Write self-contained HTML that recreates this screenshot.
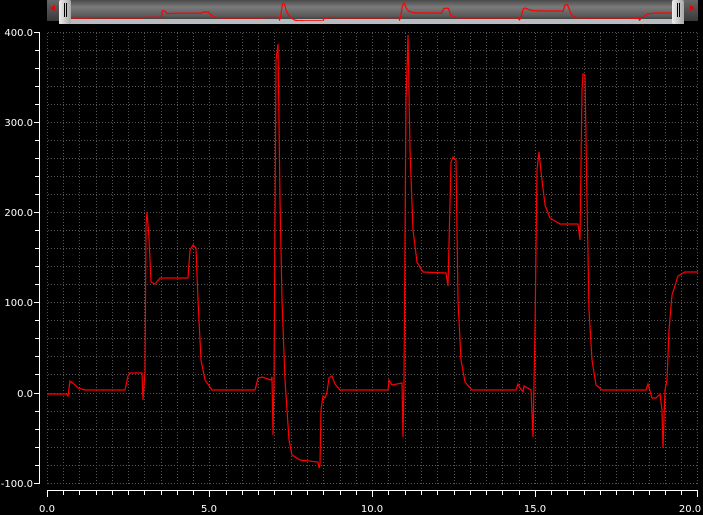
<!DOCTYPE html>
<html><head><style>
html,body{margin:0;padding:0;background:#000;width:703px;height:515px;overflow:hidden;font-family:"DejaVu Sans","Liberation Sans",sans-serif;}
svg{position:absolute;left:0;top:0}
</style></head><body>
<svg width="703" height="515" viewBox="0 0 703 515">
<defs>
<linearGradient id="bar" x1="0" y1="0" x2="0" y2="1">
<stop offset="0" stop-color="#4a4a4a"/><stop offset="0.35" stop-color="#7a7a7a"/><stop offset="0.8" stop-color="#5a5a5a"/><stop offset="1" stop-color="#3a3a3a"/></linearGradient>
<linearGradient id="hdl" x1="0" y1="0" x2="1" y2="0">
<stop offset="0" stop-color="#eeeeee"/><stop offset="1" stop-color="#a8a8a8"/></linearGradient>
<linearGradient id="end" x1="0" y1="0" x2="0" y2="1">
<stop offset="0" stop-color="#666"/><stop offset="1" stop-color="#3a3a3a"/></linearGradient>
<clipPath id="cp"><rect x="71" y="0" width="601" height="21"/></clipPath>
<pattern id="hg" width="3" height="1" patternUnits="userSpaceOnUse"><rect width="1" height="1" fill="#555"/></pattern>
<pattern id="vg" width="1" height="3" patternUnits="userSpaceOnUse"><rect width="1" height="1" fill="#555"/></pattern>
</defs>
<rect x="47" y="0" width="651" height="21" fill="url(#end)"/>
<rect x="71" y="0" width="601" height="20" fill="url(#bar)"/>
<rect x="59" y="19" width="625" height="5" fill="#b8bcc0"/>
<polygon points="50,8 55,5 55,11" fill="#e00"/>
<polygon points="695,8 690,5 690,11" fill="#e00"/>
<g clip-path="url(#cp)"><g transform="translate(71,18) scale(0.923,0.0416) translate(-47,-393)">
<polyline fill="none" stroke="#f00" stroke-width="1.2" vector-effect="non-scaling-stroke" points="47,394 67,394 68,396 70,381 74,384 78,388 85,390 125,390 128,376 130,373 142,373 143,400 145,372 146,225 147,212 149,238 151,282 155,284 160,278 188,278 190,250 193,245 196,248 198,300 201,360 205,380 212,390 255,390 258,378 262,377 271,380 272,377 273,435 274,380 276,60 278,44 280,200 282,300 285,380 289,440 292,455 300,460 318,462 319,468 320,465 321,410 323,396 325,398 327,392 329,378 332,376 335,384 340,390 388,390 389,380 392,385 402,383 403,437 404,380 406,100 408,35 410,150 413,230 417,262 423,272 446,273 448,286 451,162 453,157 456,160 458,300 461,360 465,382 472,390 516,390 518,384 520,388 523,392 524,386 531,390 533,437 535,330 537,170 539,152 541,172 545,205 550,218 560,224 578,224 580,240 582,90 583,74 585,75 587,200 589,310 592,360 596,385 602,390 646,390 648,384 652,398 656,398 660,394 662,410 663,448 665,390 667,380 669,330 672,295 678,276 685,272 698,272"/>
</g></g>
<rect x="59" y="0" width="12" height="24" rx="2" fill="url(#hdl)"/>
<rect x="64" y="3" width="1" height="14" fill="#000"/><rect x="66" y="3" width="1" height="14" fill="#000"/>
<rect x="672" y="0" width="12" height="24" rx="2" fill="url(#hdl)"/>
<rect x="677" y="3" width="1" height="14" fill="#000"/><rect x="679" y="3" width="1" height="14" fill="#000"/>
<g fill="url(#hg)">
<rect x="47" y="32" width="651" height="1"/><rect x="47" y="50" width="651" height="1"/><rect x="47" y="68" width="651" height="1"/><rect x="47" y="86" width="651" height="1"/><rect x="47" y="104" width="651" height="1"/><rect x="47" y="122" width="651" height="1"/><rect x="47" y="140" width="651" height="1"/><rect x="47" y="158" width="651" height="1"/><rect x="47" y="176" width="651" height="1"/><rect x="47" y="194" width="651" height="1"/><rect x="47" y="212" width="651" height="1"/><rect x="47" y="230" width="651" height="1"/><rect x="47" y="248" width="651" height="1"/><rect x="47" y="266" width="651" height="1"/><rect x="47" y="284" width="651" height="1"/><rect x="47" y="302" width="651" height="1"/><rect x="47" y="320" width="651" height="1"/><rect x="47" y="338" width="651" height="1"/><rect x="47" y="356" width="651" height="1"/><rect x="47" y="374" width="651" height="1"/><rect x="47" y="393" width="651" height="1"/><rect x="47" y="411" width="651" height="1"/><rect x="47" y="429" width="651" height="1"/><rect x="47" y="447" width="651" height="1"/><rect x="47" y="465" width="651" height="1"/><rect x="47" y="483" width="651" height="1"/>
</g>
<g fill="url(#vg)">
<rect x="47" y="32" width="1" height="452"/><rect x="63" y="32" width="1" height="452"/><rect x="79" y="32" width="1" height="452"/><rect x="96" y="32" width="1" height="452"/><rect x="112" y="32" width="1" height="452"/><rect x="128" y="32" width="1" height="452"/><rect x="144" y="32" width="1" height="452"/><rect x="161" y="32" width="1" height="452"/><rect x="177" y="32" width="1" height="452"/><rect x="193" y="32" width="1" height="452"/><rect x="209" y="32" width="1" height="452"/><rect x="226" y="32" width="1" height="452"/><rect x="242" y="32" width="1" height="452"/><rect x="258" y="32" width="1" height="452"/><rect x="274" y="32" width="1" height="452"/><rect x="291" y="32" width="1" height="452"/><rect x="307" y="32" width="1" height="452"/><rect x="323" y="32" width="1" height="452"/><rect x="340" y="32" width="1" height="452"/><rect x="356" y="32" width="1" height="452"/><rect x="372" y="32" width="1" height="452"/><rect x="388" y="32" width="1" height="452"/><rect x="405" y="32" width="1" height="452"/><rect x="421" y="32" width="1" height="452"/><rect x="437" y="32" width="1" height="452"/><rect x="454" y="32" width="1" height="452"/><rect x="470" y="32" width="1" height="452"/><rect x="486" y="32" width="1" height="452"/><rect x="502" y="32" width="1" height="452"/><rect x="519" y="32" width="1" height="452"/><rect x="535" y="32" width="1" height="452"/><rect x="551" y="32" width="1" height="452"/><rect x="567" y="32" width="1" height="452"/><rect x="584" y="32" width="1" height="452"/><rect x="600" y="32" width="1" height="452"/><rect x="616" y="32" width="1" height="452"/><rect x="633" y="32" width="1" height="452"/><rect x="649" y="32" width="1" height="452"/><rect x="665" y="32" width="1" height="452"/><rect x="681" y="32" width="1" height="452"/><rect x="697" y="32" width="1" height="452"/>
</g>
<g stroke="#fff" stroke-width="1" shape-rendering="crispEdges">
<line x1="39.5" y1="32" x2="39.5" y2="484"/>
<line x1="34" y1="32.5" x2="40" y2="32.5"/><line x1="34" y1="122.5" x2="40" y2="122.5"/><line x1="34" y1="212.5" x2="40" y2="212.5"/><line x1="34" y1="302.5" x2="40" y2="302.5"/><line x1="34" y1="393.5" x2="40" y2="393.5"/><line x1="34" y1="483.5" x2="40" y2="483.5"/>
<line x1="35" y1="50.5" x2="40" y2="50.5"/><line x1="35" y1="68.5" x2="40" y2="68.5"/><line x1="35" y1="86.5" x2="40" y2="86.5"/><line x1="35" y1="104.5" x2="40" y2="104.5"/><line x1="35" y1="140.5" x2="40" y2="140.5"/><line x1="35" y1="158.5" x2="40" y2="158.5"/><line x1="35" y1="176.5" x2="40" y2="176.5"/><line x1="35" y1="194.5" x2="40" y2="194.5"/><line x1="35" y1="230.5" x2="40" y2="230.5"/><line x1="35" y1="248.5" x2="40" y2="248.5"/><line x1="35" y1="266.5" x2="40" y2="266.5"/><line x1="35" y1="284.5" x2="40" y2="284.5"/><line x1="35" y1="320.5" x2="40" y2="320.5"/><line x1="35" y1="338.5" x2="40" y2="338.5"/><line x1="35" y1="356.5" x2="40" y2="356.5"/><line x1="35" y1="374.5" x2="40" y2="374.5"/><line x1="35" y1="411.5" x2="40" y2="411.5"/><line x1="35" y1="429.5" x2="40" y2="429.5"/><line x1="35" y1="447.5" x2="40" y2="447.5"/><line x1="35" y1="465.5" x2="40" y2="465.5"/>
<line x1="47" y1="490.5" x2="698" y2="490.5"/>
<path d="M47.5 490v7M63.5 490v5M79.5 490v5M96.5 490v5M112.5 490v5M128.5 490v5M144.5 490v5M161.5 490v5M177.5 490v5M193.5 490v5M209.5 490v7M226.5 490v5M242.5 490v5M258.5 490v5M274.5 490v5M291.5 490v5M307.5 490v5M323.5 490v5M340.5 490v5M356.5 490v5M372.5 490v7M388.5 490v5M405.5 490v5M421.5 490v5M437.5 490v5M454.5 490v5M470.5 490v5M486.5 490v5M502.5 490v5M519.5 490v5M535.5 490v7M551.5 490v5M567.5 490v5M584.5 490v5M600.5 490v5M616.5 490v5M633.5 490v5M649.5 490v5M665.5 490v5M681.5 490v5M697.5 490v7"/>
</g>
<g fill="#fff" font-size="10" font-family="DejaVu Sans, sans-serif">
<text x="33" y="36" text-anchor="end">400.0</text>
<text x="33" y="126" text-anchor="end">300.0</text>
<text x="33" y="216" text-anchor="end">200.0</text>
<text x="33" y="306" text-anchor="end">100.0</text>
<text x="33" y="397" text-anchor="end">0.0</text>
<text x="33" y="487" text-anchor="end">-100.0</text>
<text x="47" y="512" text-anchor="middle">0.0</text>
<text x="209" y="512" text-anchor="middle">5.0</text>
<text x="372" y="512" text-anchor="middle">10.0</text>
<text x="535" y="512" text-anchor="middle">15.0</text>
<text x="690" y="512" text-anchor="middle">20.0</text>
</g>
<polyline fill="none" stroke="#f00" stroke-width="1.2" points="47,394 67,394 68,396 70,381 74,384 78,388 85,390 125,390 128,376 130,373 142,373 143,400 145,372 146,225 147,212 149,238 151,282 155,284 160,278 188,278 190,250 193,245 196,248 198,300 201,360 205,380 212,390 255,390 258,378 262,377 271,380 272,377 273,435 274,380 276,60 278,44 280,200 282,300 285,380 289,440 292,455 300,460 318,462 319,468 320,465 321,410 323,396 325,398 327,392 329,378 332,376 335,384 340,390 388,390 389,380 392,385 402,383 403,437 404,380 406,100 408,35 410,150 413,230 417,262 423,272 446,273 448,286 451,162 453,157 456,160 458,300 461,360 465,382 472,390 516,390 518,384 520,388 523,392 524,386 531,390 533,437 535,330 537,170 539,152 541,172 545,205 550,218 560,224 578,224 580,240 582,90 583,74 585,75 587,200 589,310 592,360 596,385 602,390 646,390 648,384 652,398 656,398 660,394 662,410 663,448 665,390 667,380 669,330 672,295 678,276 685,272 698,272"/>
</svg>
</body></html>
